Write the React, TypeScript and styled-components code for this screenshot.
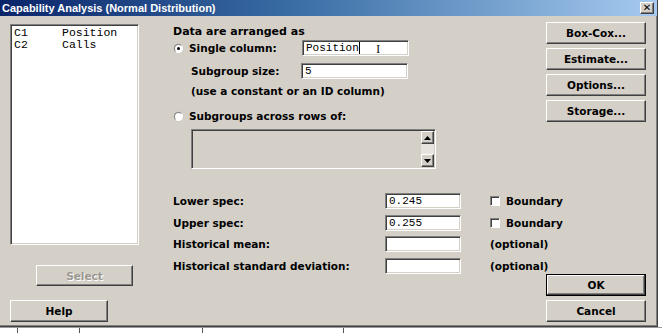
import styled, { createGlobalStyle, css } from 'styled-components';

const GlobalStyle = createGlobalStyle`
  html, body {
    margin: 0;
    padding: 0;
    background: #ffffff;
  }
  body {
    width: 662px;
    height: 333px;
    overflow: hidden;
    font-family: 'DejaVu Sans', Verdana, sans-serif;
  }
`;

const face = '#d4d0c8';

const raised = css`
  border-style: solid;
  border-width: 1px;
  border-color: #ffffff #404040 #404040 #ffffff;
  box-shadow: inset -1px -1px 0 #808080, inset 1px 1px 0 ${face};
`;

const sunken = css`
  border-style: solid;
  border-width: 1px;
  border-color: #808080 #ffffff #ffffff #808080;
  box-shadow: inset 1px 1px 0 #404040, inset -1px -1px 0 ${face};
`;

const Page = styled.div`
  width: 662px;
  height: 333px;
  display: flex;
  flex-direction: column;
  background: #ffffff;
`;

const Dialog = styled.div`
  width: 658px;
  height: 327px;
  box-sizing: border-box;
  background: ${face};
  border-right: 1px solid #404040;
  border-bottom: 1px solid #404040;
  box-shadow: inset -1px -1px 0 #808080;
  display: flex;
  flex-direction: column;
`;

const TitleBar = styled.div`
  height: 16px;
  flex: none;
  display: flex;
  align-items: center;
  justify-content: space-between;
  padding: 0 3px 0 2px;
  background: linear-gradient(to right, #0a246a 0%, #3a6ea5 45%, #a6caf0 100%);
`;

const Title = styled.span`
  color: #ffffff;
  font-family: 'Liberation Sans', Arial, sans-serif;
  font-size: 11px;
  font-weight: bold;
`;

const CloseButton = styled.div`
  ${raised};
  width: 14px;
  height: 12px;
  box-sizing: border-box;
  background: ${face};
  display: flex;
  align-items: center;
  justify-content: center;
  color: #000;
  font: bold 10px 'DejaVu Sans', sans-serif;
  line-height: 1;
`;

const Body = styled.div`
  flex: 1;
  display: flex;
  padding: 6px 10px 0 10px;
  gap: 34px;
`;

const LeftColumn = styled.div`
  width: 129px;
  display: flex;
  flex-direction: column;
`;

const ListBox = styled.div`
  ${sunken};
  margin-top: 2px;
  height: 221px;
  box-sizing: border-box;
  background: #ffffff;
  padding: 2px 3px;
  font-family: 'Liberation Mono', 'Courier New', monospace;
  font-size: 11.5px;
  line-height: 12px;
  color: #000;
`;

const ListItem = styled.div`
  display: flex;
`;

const ColId = styled.span`
  width: 48px;
`;

const Button = styled.div<{ $w?: number; $disabled?: boolean; $default?: boolean }>`
  ${raised};
  width: ${(p) => p.$w ?? 100}px;
  height: 22px;
  box-sizing: border-box;
  background: ${face};
  display: flex;
  align-items: center;
  justify-content: center;
  font-size: 10.5px;
  font-weight: bold;
  color: ${(p) => (p.$disabled ? '#9a9891' : '#000')};
  text-shadow: ${(p) => (p.$disabled ? '1px 1px 0 #ffffff' : 'none')};
  ${(p) =>
    p.$default &&
    css`
      border-color: #000;
      box-shadow: inset -1px -1px 0 #404040, inset 1px 1px 0 #ffffff, inset -2px -2px 0 #808080;
    `}
`;

const SelectButton = styled(Button)`
  margin: 20px 0 0 26px;
  height: 21px;
`;

const HelpButton = styled(Button)`
  margin-top: 14px;
`;

const MainArea = styled.div`
  flex: 1;
  display: flex;
  flex-direction: column;
`;

const TopRow = styled.div`
  display: flex;
  justify-content: space-between;
`;

const Form = styled.div`
  display: flex;
  flex-direction: column;
  width: 263px;
`;

const Label = styled.span<{ $w?: number }>`
  font-size: 10.5px;
  font-weight: bold;
  color: #000;
  white-space: nowrap;
  ${(p) => p.$w !== undefined && `width: ${p.$w}px; flex: none;`}
`;

const Heading = styled.div`
  height: 18px;
  display: flex;
  align-items: center;
  font-size: 11px;
  font-weight: bold;
  color: #000;
  white-space: nowrap;
`;

const FieldRow = styled.div<{ $top?: number; $indent?: number }>`
  height: 16px;
  margin-top: ${(p) => p.$top ?? 0}px;
  padding-left: ${(p) => p.$indent ?? 0}px;
  display: flex;
  align-items: center;
`;

const Radio = styled.span<{ $checked?: boolean }>`
  width: 9px;
  height: 9px;
  box-sizing: border-box;
  border-radius: 50%;
  margin: 0 6px 0 0;
  background: #ffffff;
  border: 1px solid;
  border-color: #808080 #ffffff #ffffff #808080;
  box-shadow: 0 0 0 0.5px #c8c4bc;
  display: flex;
  align-items: center;
  justify-content: center;
  flex: none;
  &::after {
    content: '';
    width: 3px;
    height: 3px;
    border-radius: 50%;
    background: ${(p) => (p.$checked ? '#000' : 'transparent')};
  }
`;

const TextBox = styled.div<{ $w: number }>`
  ${sunken};
  width: ${(p) => p.$w}px;
  height: 16px;
  box-sizing: border-box;
  background: #ffffff;
  padding: 0 3px;
  display: flex;
  align-items: center;
  font-family: 'Liberation Mono', 'Courier New', monospace;
  font-size: 11px;
  color: #000;
  position: relative;
`;

const Caret = styled.span`
  display: inline-block;
  width: 1px;
  height: 12px;
  background: #000;
`;

const IBeam = styled.span`
  position: absolute;
  left: 73px;
  top: 1px;
  font-family: 'Liberation Serif', serif;
  font-size: 13px;
  line-height: 13px;
  color: #222;
`;

const RowsBox = styled.div`
  ${sunken};
  margin: 5px 0 0 18px;
  width: 245px;
  height: 40px;
  box-sizing: border-box;
  background: ${face};
  display: flex;
  justify-content: flex-end;
`;

const ScrollBar = styled.div`
  width: 13px;
  display: flex;
  flex-direction: column;
  justify-content: space-between;
  background: #e6e3de;
  margin: 1px 1px 1px 0;
`;

const ScrollArrow = styled.div`
  ${raised};
  height: 13px;
  box-sizing: border-box;
  background: ${face};
  display: flex;
  align-items: center;
  justify-content: center;
`;

const ButtonColumn = styled.div`
  display: flex;
  flex-direction: column;
  gap: 4px;
  margin-right: 1px;
`;

const SpecGrid = styled.div`
  margin-top: 24px;
  display: grid;
  grid-template-columns: 212px 76px 29px auto;
  grid-auto-rows: 16px;
  row-gap: 5.5px;
  align-items: center;
`;

const Check = styled.span`
  width: 10px;
  height: 10px;
  box-sizing: border-box;
  background: #ffffff;
  border: 1px solid;
  border-color: #808080 #ffffff #ffffff #808080;
  box-shadow: inset 1px 1px 0 #404040;
  margin-right: 6px;
  flex: none;
`;

const CheckCell = styled.div`
  display: flex;
  align-items: center;
`;

const Spacer = styled.span``;

const ActionColumn = styled.div`
  margin-top: 0.5px;
  align-self: flex-end;
  display: flex;
  flex-direction: column;
  gap: 4px;
  margin-right: 1px;
`;

const Worksheet = styled.div`
  flex: 1;
  display: flex;
  border-top: 1px solid #9a9a9a;
  overflow: hidden;
`;

const Cell = styled.div<{ $w: number }>`
  width: ${(p) => p.$w}px;
  border-right: 1px solid #555;
  flex: none;
`;

const specs = [
  { label: 'Lower spec:', value: '0.245', extra: 'check' },
  { label: 'Upper spec:', value: '0.255', extra: 'check' },
  { label: 'Historical mean:', value: '', extra: 'optional' },
  { label: 'Historical standard deviation:', value: '', extra: 'optional' },
];

const ArrowIcon = ({ up }: { up?: boolean }) => (
  <svg width="7" height="4" viewBox="0 0 7 4">
    <path d={up ? 'M3.5 0 L7 4 L0 4 Z' : 'M0 0 L7 0 L3.5 4 Z'} fill="#000" />
  </svg>
);

const App = () => (
  <Page>
    <GlobalStyle />
    <Dialog>
      <TitleBar>
        <Title>Capability Analysis (Normal Distribution)</Title>
        <CloseButton>✕</CloseButton>
      </TitleBar>
      <Body>
        <LeftColumn>
          <ListBox>
            <ListItem>
              <ColId>C1</ColId>
              <span>Position</span>
            </ListItem>
            <ListItem>
              <ColId>C2</ColId>
              <span>Calls</span>
            </ListItem>
          </ListBox>
          <SelectButton $w={97} $disabled>
            Select
          </SelectButton>
          <HelpButton $w={98}>Help</HelpButton>
        </LeftColumn>
        <MainArea>
          <TopRow>
            <Form>
              <Heading>Data are arranged as</Heading>
              <FieldRow $indent={1}>
                <Radio $checked />
                <Label $w={113}>Single column:</Label>
                <TextBox $w={107}>
                  Position
                  <Caret />
                  <IBeam>I</IBeam>
                </TextBox>
              </FieldRow>
              <FieldRow $top={7} $indent={18}>
                <Label $w={110}>Subgroup size:</Label>
                <TextBox $w={107}>5</TextBox>
              </FieldRow>
              <FieldRow $top={4} $indent={18}>
                <Label>(use a constant or an ID column)</Label>
              </FieldRow>
              <FieldRow $top={9} $indent={1}>
                <Radio />
                <Label>Subgroups across rows of:</Label>
              </FieldRow>
              <RowsBox>
                <ScrollBar>
                  <ScrollArrow>
                    <ArrowIcon up />
                  </ScrollArrow>
                  <ScrollArrow>
                    <ArrowIcon />
                  </ScrollArrow>
                </ScrollBar>
              </RowsBox>
            </Form>
            <ButtonColumn>
              <Button>Box-Cox...</Button>
              <Button>Estimate...</Button>
              <Button>Options...</Button>
              <Button>Storage...</Button>
            </ButtonColumn>
          </TopRow>
          <SpecGrid>
            {specs.map((s) => (
              <>
                <Label key={s.label}>{s.label}</Label>
                <TextBox $w={76}>{s.value}</TextBox>
                <Spacer />
                {s.extra === 'check' ? (
                  <CheckCell>
                    <Check />
                    <Label>Boundary</Label>
                  </CheckCell>
                ) : (
                  <Label>(optional)</Label>
                )}
              </>
            ))}
          </SpecGrid>
          <ActionColumn>
            <Button $default>OK</Button>
            <Button>Cancel</Button>
          </ActionColumn>
        </MainArea>
      </Body>
    </Dialog>
    <Worksheet>
      <Cell $w={17} />
      <Cell $w={61} />
      <Cell $w={122} />
      <Cell $w={140} />
      <Cell $w={322} />
    </Worksheet>
  </Page>
);

export default App;
